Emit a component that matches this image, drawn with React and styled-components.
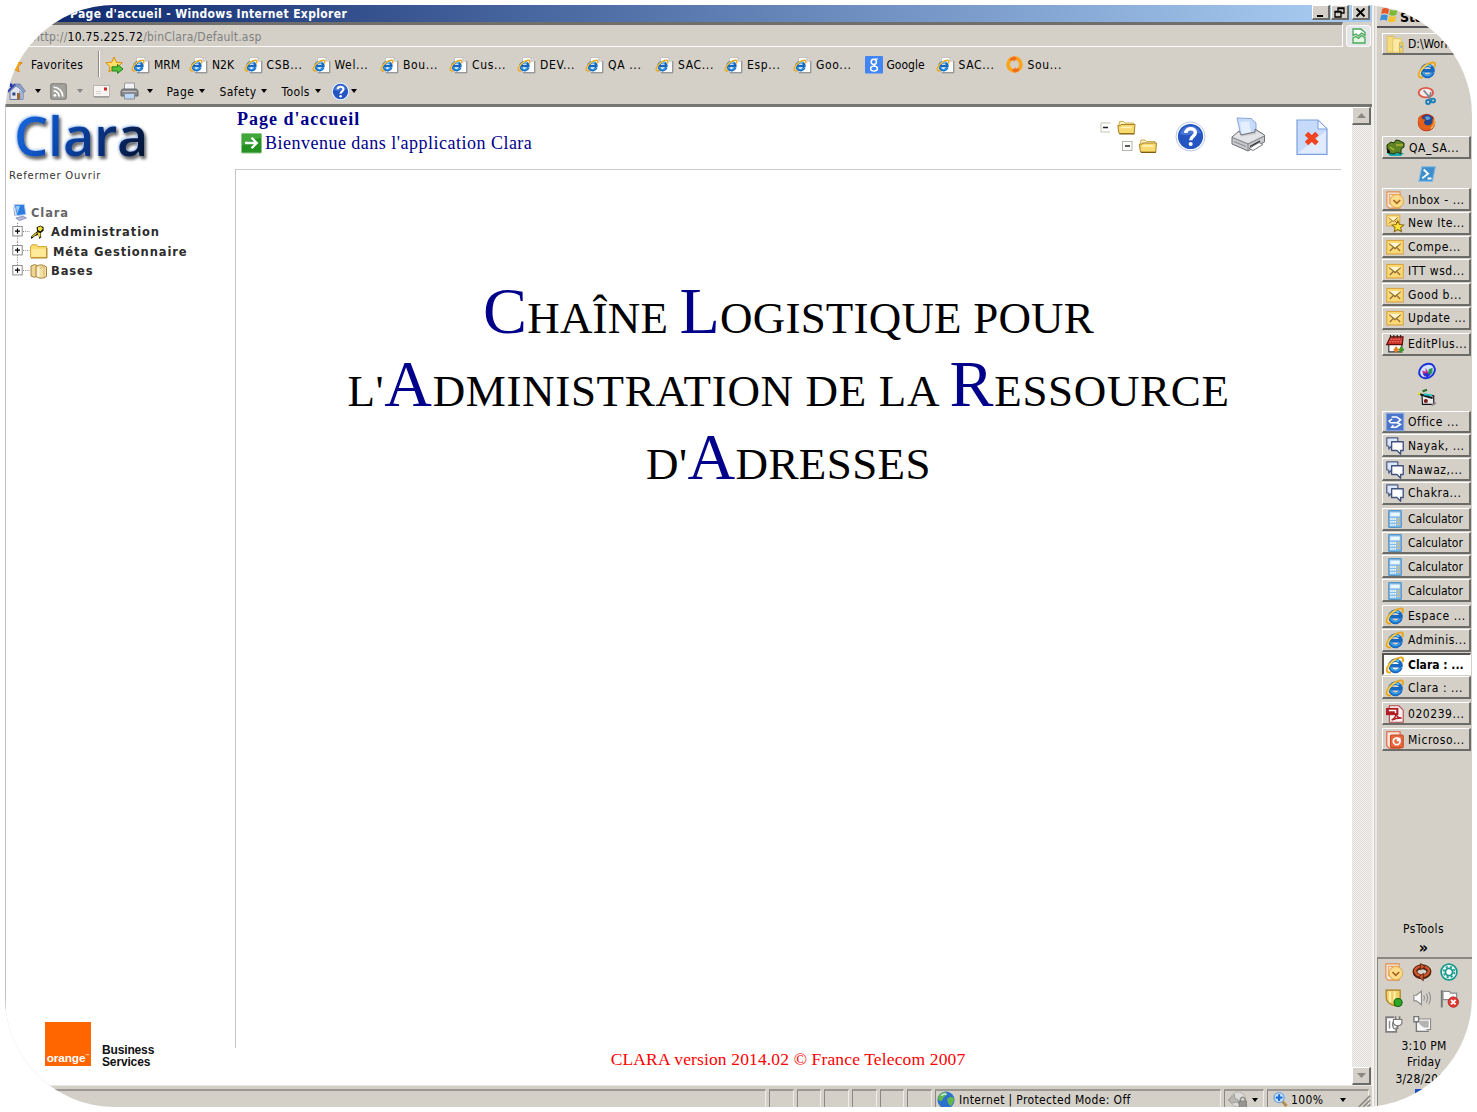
import React from "react";
import styled, { createGlobalStyle, css } from "styled-components";

const FACE = "#d4d0c8";
const UI = `"DejaVu Sans Condensed", "DejaVu Sans", sans-serif`;
const SERIF = `"Liberation Serif", serif`;

const Global = createGlobalStyle`
  * { box-sizing: border-box; }
  body { margin: 0; background: #fff; overflow: hidden; }
  svg { display: block; flex: none; overflow: visible; }
`;

const Screen = styled.div`
  margin: 5px;
  width: 1467px;
  height: 1102px;
  display: flex;
  overflow: hidden;
  border-radius: 110px;
  background: ${FACE};
  font: 12px/16px ${UI};
  color: #000;
  white-space: nowrap;
`;

const Browser = styled.div`
  width: 1367px;
  flex: none;
  display: flex;
  flex-direction: column;
`;

const TitleBar = styled.div`
  height: 17px;
  display: flex;
  align-items: center;
  padding: 0 2px 0 65px;
  background: linear-gradient(90deg, #0a246a 0%, #a6caf0 97%);
  color: #fff;
  font-weight: bold;
  font-size: 12px;
  letter-spacing: 0.35px;
`;

const WindowButtons = styled.div`
  display: flex;
  margin-left: auto;
  gap: 1px;
  align-self: flex-start;
`;

const raised = css`
  background: ${FACE};
  border-style: solid;
  border-width: 1px 2px 2px 1px;
  border-color: #fff #6b6b68 #6b6b68 #fff;
`;

const WinButton = styled.div`
  ${raised}
  width: 18px;
  height: 15px;
  margin-left: ${(p) => p.$ml || 0}px;
  display: flex;
  align-items: center;
  justify-content: center;
`;

const AddressRow = styled.div`
  height: 25px;
  display: flex;
  align-items: flex-start;
`;

const AddressField = styled.div`
  width: 1338px;
  height: 25px;
  border-style: solid;
  border-width: 3px 1px 1px 0;
  border-color: #6f6e6a #fff #fbfbf9 #fff;
  padding: 4px 0 0 28px;
  color: #808080;
  letter-spacing: 0.2px;
  b { font-weight: normal; color: #000; letter-spacing: 0.3px; }
`;

const CompatButton = styled.div`
  width: 25px;
  height: 22px;
  margin: 3px 0 0 3px;
  display: flex;
  align-items: center;
  justify-content: center;
  border: 1px solid #fafafa;
  border-radius: 3px;
  background: #e4e6ea;
`;

const FavBar = styled.div`
  height: 34px;
  display: flex;
  align-items: center;
`;

const FavItem = styled.div`
  width: ${(p) => p.$w}px;
  padding-top: 1px;
  display: flex;
  align-items: center;
  flex: none;
  letter-spacing: ${(p) => p.$ls || 0}px;
`;

const FavIcon = styled.span`
  width: ${(p) => p.$w || 22}px;
  flex: none;
`;

const Divider = styled.i`
  width: 2px;
  height: 26px;
  margin: 0 5px 0 0;
  background: #8d8a84;
  border-right: 1px solid #fff;
`;

const CommandBar = styled.div`
  height: 20px;
  display: flex;
  align-items: center;
  letter-spacing: 0.4px;
`;

const Slot = styled.div`
  width: ${(p) => p.$w}px;
  flex: none;
  display: flex;
  align-items: center;
`;

const MenuWord = styled(Slot)`
  padding: 1px 0 0 0.5px;
`;

const Arrow = styled.i`
  border: 3.5px solid transparent;
  border-top: 4px solid ${(p) => p.$color || "#000"};
  border-bottom: 0;
`;

const Edge = styled.div`
  height: 6px;
  border-bottom: 3px solid #777672;
`;

const Viewport = styled.div`
  height: 978px;
  display: flex;
  background: #fff;
`;

const Sidebar = styled.div`
  width: 230px;
  display: flex;
  flex-direction: column;
  border-left: 1px solid #c2c2c2;
`;

const ClaraLogo = styled.div`
  height: 58px;
  padding-left: 8px;
  font: 600 54px/56px "Open Sans", "Noto Sans", sans-serif;
  letter-spacing: -0.2px;
  span {
    background: linear-gradient(115deg, #1a6ae0 5%, #0b4bb4 35%, #0a2f78 65%, #03122e 95%);
    -webkit-background-clip: text;
    background-clip: text;
    color: transparent;
    filter: drop-shadow(-1px -1px 1px #a9c8f5) drop-shadow(2px 3px 1.5px rgba(0, 0, 0, 0.6));
  }
`;

const SideLinks = styled.div`
  height: 38px;
  padding: 3px 0 0 3px;
  font: 10px/16px "DejaVu Sans", sans-serif;
  letter-spacing: 0.77px;
  color: #333;
`;

const TreeRow = styled.div`
  height: 19.5px;
  padding-left: ${(p) => p.$pl}px;
  display: flex;
  align-items: center;
  font: bold 11.5px/16px "DejaVu Sans", sans-serif;
  letter-spacing: 0.88px;
  color: ${(p) => p.$color || "#2c2c2c"};
`;

const TreeIcon = styled.span`
  width: ${(p) => p.$w}px;
  flex: none;
`;

const OrangeLogo = styled.div`
  margin: auto 0 19px 39px;
  display: flex;
  align-items: flex-end;
  gap: 11px;
`;

const OrangeBox = styled.div`
  width: 46px;
  height: 44px;
  padding-bottom: 1px;
  display: flex;
  align-items: flex-end;
  justify-content: center;
  background: #ff6600;
  color: #fff;
  font: bold 11.8px/14px "Liberation Sans", sans-serif;
  letter-spacing: -0.1px;
  sup { font-size: 4px; line-height: 8px; margin-bottom: 5px; }
`;

const OrangeText = styled.div`
  margin-bottom: -2px;
  font: bold 12px/12px "Liberation Sans", sans-serif;
  letter-spacing: -0.15px;
  color: #111;
`;

const Page = styled.div`
  width: 1117px;
  display: flex;
  flex-direction: column;
`;

const PageHeader = styled.div`
  height: 62px;
  width: 1105px;
  display: flex;
  justify-content: space-between;
  color: #00008b;
  font: 18px/24px ${SERIF};
`;

const PageTitle = styled.div`
  padding-left: 2px;
  font-weight: bold;
  letter-spacing: 0.98px;
`;

const Welcome = styled.div`
  padding-left: 6px;
  display: flex;
  align-items: center;
  gap: 3px;
  letter-spacing: 0.49px;
`;

const Tools = styled.div`
  display: flex;
  align-items: flex-start;
  padding: 10px 12px 0 0;
`;

const ToolSlot = styled.div`
  width: ${(p) => p.$w}px;
  padding-top: ${(p) => p.$pt || 0}px;
`;

const Canvas = styled.div`
  width: 1106px;
  height: 879px;
  padding-top: 111.5px;
  border-top: 1.5px solid #cbcbcb;
  border-left: 1.5px solid #c4c4c4;
`;

const Headline = styled.div`
  font: 45px/73.2px ${SERIF};
  text-transform: uppercase;
  text-align: center;
  letter-spacing: ${(p) => p.$ls}px;
  em {
    font-style: normal;
    font-size: 66px;
    line-height: 0;
    color: #00008b;
  }
`;

const Version = styled.div`
  width: 1106px;
  text-align: center;
  color: #ff0000;
  font: 17.5px/22px ${SERIF};
  letter-spacing: 0.14px;
`;

const Scroll = styled.div`
  width: 20px;
  display: flex;
  flex-direction: column;
  justify-content: space-between;
  background: repeating-conic-gradient(#e0ddd8 0% 25%, #f3f2f0 0% 50%) 0 0 / 2px 2px;
`;

const ScrollButton = styled.div`
  ${raised}
  width: 19px;
  height: 18px;
  display: flex;
  align-items: center;
  justify-content: center;
`;

const StatusBar = styled.div`
  height: 22px;
  padding-top: 3px;
  display: flex;
  gap: 3px;
  border-top: 1px solid #e9e7e3;
`;

const Cell = styled.div`
  width: ${(p) => p.$w}px;
  flex: none;
  height: 18px;
  padding: 1px 0 0 ${(p) => p.$pl || 0}px;
  display: flex;
  align-items: center;
  border-top: 2px solid #9b9893;
  border-left: 1px solid ${(p) => (p.$first ? FACE : "#8b8883")};
  border-right: 1px solid #efedea;
  letter-spacing: 0.36px;
`;

const Taskbar = styled.div`
  width: 100px;
  flex: none;
  display: flex;
  flex-direction: column;
  border-left: 2px solid #f4f3f1;
  padding-left: 1px;
`;

const TaskInner = styled.div`
  flex: 1;
  display: flex;
  flex-direction: column;
  border-left: 2px solid #e9e7e3;
`;

const StartButton = styled.div`
  height: 23px;
  margin: 0 2px 4.6px 0;
  padding: 1px 0 0 3px;
  display: flex;
  align-items: flex-start;
  gap: 2px;
  font-weight: bold;
  font-size: 14px;
  line-height: 22px;
  border-bottom: 2px solid #555;
`;

const Group = styled.div`
  padding: 0 1px 2.2px 5px;
`;

const Task = styled.div`
  ${raised}
  height: 22.75px;
  margin-bottom: 1px;
  padding: 1px 0 0 3px;
  display: flex;
  align-items: center;
  letter-spacing: ${(p) => p.$ls}px;
  ${(p) =>
    p.$active &&
    css`
      background: #fff;
      font-weight: bold;
      border-width: 2px 1px 1px 2px;
      border-color: #55534f #fff #fff #55534f;
      padding-left: 2px;
    `}
  svg { margin-right: 4px; }
`;

const Launcher = styled.div`
  height: 23.75px;
  display: flex;
  align-items: center;
  justify-content: center;
`;

const PsTools = styled.div`
  margin-top: auto;
  height: 37px;
  text-align: center;
  line-height: 18px;
  padding-right: 2px;
  letter-spacing: 0.4px;
  b { display: block; font-size: 16px; line-height: 19px; }
`;

const Tray = styled.div`
  height: 150px;
  border-top: 2px solid #8b8883;
  border-left: 1px solid #8b8883;
  padding-left: 7px;
`;

const TrayIcons = styled.div`
  display: grid;
  grid-template-columns: repeat(3, 27.5px);
  grid-auto-rows: 26px;
  align-items: center;
`;

const Clock = styled.div`
  width: 78px;
  padding-top: 1px;
  text-align: center;
  line-height: 16.4px;
  letter-spacing: 0.2px;
`;

const TrayBadge = styled.div`
  width: 18px;
  height: 10px;
  margin: 2px 0 0 30px;
  background: #1f4fc0;
`;

const Svg = ({ s = 18, w, h, v = 16, children }) => (
  <svg width={w || s} height={h || s} viewBox={typeof v === "string" ? v : `0 0 ${v} ${v}`} fill="none">
    {children}
  </svg>
);

const IeMark = () => (
  <>
    <path d="M13.2 10.4A5 5 0 1 1 13.3 7.4V8.6H5" stroke="#1769c0" strokeWidth="3.1" />
    <path d="M12.6 10.6A4.6 4.6 0 0 1 4.2 9.8" stroke="#38a0ea" strokeWidth="1.4" />
    <path d="M4.4 6.4A4.3 4.3 0 0 1 11.6 5" stroke="#6ccaf8" strokeWidth="1.5" />
    <path d="M4.4 14.6C-2.4 15.6 1 7.4 7.4 3.4C13 0 16.6 .8 14.6 5.4" stroke="#e9a820" strokeWidth="1.9" />
    <path d="M1.8 13C1.2 10 4.4 5.6 8.2 3.2" stroke="#ffdd63" strokeWidth=".9" />
  </>
);
const Ie = ({ s = 18 }) => <Svg s={s}><IeMark /></Svg>;

const IePage = () => (
  <Svg s={18} v={18}>
    <path d="M4.5 1.5H13.5L16.5 4.5V16.5H4.5Z" fill="#fff" stroke="#c4c4c4" />
    <path d="M16.8 5V16.8H5" stroke="#858585" />
    <path d="M13 1.5V5H16.5" stroke="#b5b5b5" fill="#e4e4e4" />
    <g transform="translate(-.3 3.2) scale(.8)"><IeMark /></g>
  </Svg>
);

const GoogleIcon = () => (
  <Svg s={18} v={18}>
    <rect width="18" height="17.5" rx="1" fill="#4285f4" />
    <circle cx="8.8" cy="5.8" r="2.6" stroke="#fff" strokeWidth="1.5" />
    <ellipse cx="9" cy="12.6" rx="3.4" ry="2.5" stroke="#fff" strokeWidth="1.4" />
    <path d="M10 3H13M8 8.4L10.4 10.2" stroke="#fff" strokeWidth="1.2" />
  </Svg>
);

const SoulIcon = () => (
  <Svg s={17}>
    <circle cx="8" cy="8" r="6" stroke="#fba51c" strokeWidth="3.6" />
    <path d="M4 3.8A5.9 5.9 0 0 1 8.6 2.2M12 12.2A5.9 5.9 0 0 1 7.4 13.8" stroke="#f26a1d" strokeWidth="2.6" />
    <path d="M7 0L10.4 2.6L7 5.4ZM9 10.6L5.6 13.4L9 16Z" fill="#f26a1d" />
  </Svg>
);

const Star = ({ add }) => (
  <Svg s={20} v={20}>
    <path d="M9 2L11.4 7.2L17.3 7.8L12.9 11.6L14.2 17L9 14.2L3.9 17L5.1 11.6L.8 7.8L6.7 7.2Z" fill={add ? "#ffe06a" : "#fba91e"} stroke="#dc8b12" />
    {add && <path d="M7 11.8H12.5V9.4L18 14L12.5 18.4V16H7Z" fill="#54c23b" stroke="#24831b" />}
  </Svg>
);

const Home = () => (
  <Svg s={19} v={19}>
    <path d="M3 1.5H5.5V5H3Z" fill="#1d37b5" />
    <path d="M3 9V17.5H16V8.5L10 3Z" fill="#dfe4ef" stroke="#6477a1" />
    <path d="M.8 9.5L8 2L13 2L18.4 9.2L16.6 10.6L12 6L8 3.6L2 10.4Z" fill="#8fa0c8" stroke="#50659c" strokeWidth=".6" />
    <path d="M.8 9.5L8 2" stroke="#2338b0" strokeWidth="1.6" />
    <path d="M12 8L16 10.5V17.5H12Z" fill="#9fb2d6" />
    <path d="M5.4 10.5H8.4V13.5H5.4Z" fill="#2d4685" />
    <path d="M10 11H13V17.5H10Z" fill="#9a6835" />
  </Svg>
);

const Rss = () => (
  <Svg s={17}>
    <rect x=".7" y=".7" width="14.6" height="14.6" rx="1.5" fill="#a4a29e" stroke="#7d7b77" />
    <circle cx="4.6" cy="11.6" r="1.3" fill="#fff" />
    <path d="M3.4 7.5A5 5 0 0 1 8.5 12.8M3.4 4A8.6 8.6 0 0 1 12 12.8" stroke="#fff" strokeWidth="1.6" />
  </Svg>
);

const Mail = () => (
  <Svg w={17} h={14} v="0 0 17 14">
    <rect x=".5" y="1.5" width="16" height="11" fill="#f7f4f2" stroke="#bab5ae" />
    <path d="M1 13H16" stroke="#888" />
    <rect x="11" y="3.5" width="3" height="3" fill="#cf2828" />
    <path d="M3 7.5H8M3 9.5H8" stroke="#d5d2d0" />
  </Svg>
);

const SmallPrinter = () => (
  <Svg w={19} h={18} v="0 0 19 18">
    <path d="M4.5 1H14.5V8H4.5Z" fill="#f2f2f2" stroke="#9a9a9a" />
    <path d="M2.5 7H16.5L18 9V14H1V9Z" fill="#84868a" stroke="#66686d" />
    <path d="M4.5 11.5H14.5V17H4.5Z" fill="#bcd6f7" stroke="#8a8f98" />
    <path d="M2.5 9.5H16.5" stroke="#c4c4c4" />
  </Svg>
);

const Help = ({ s }) => (
  <Svg s={s} v={32}>
    <circle cx="16" cy="16" r="15" fill="#fff" stroke="#b7c4e6" />
    <circle cx="16" cy="16" r="13" fill="#2455c0" />
    <path d="M5 13A11.5 11.5 0 0 1 27 13C20 10 12 18 5 13Z" fill="#5e8ae2" opacity=".6" />
    <path d="M11.2 12.4C11.2 6.4 21 6.6 21 12.2C21 16 16.2 15.8 16.2 19.8" stroke="#fff" strokeWidth="3.6" />
    <circle cx="16.2" cy="23.8" r="2.1" fill="#fff" />
  </Svg>
);

const Monitor = () => (
  <Svg s={17}>
    <path d="M3 .6L12.5 .2L14 9.8L5.4 11Z" fill="#2e7be0" stroke="#b9cdf0" />
    <path d="M4.4 2L8.5 1.7L6 9Z" fill="#9acbfa" />
    <path d="M2 1L4.5 11.5L3 10.5Z" fill="#8d9cc9" />
    <path d="M4.5 13.2L11.5 11.4L14.5 13.2L8 15.6Z" fill="#b4b8da" stroke="#8084ae" strokeWidth=".7" />
  </Svg>
);

const PlusBox = ({ last }) => (
  <Svg w={18} h={19.5} v="0 0 18 19.5">
    <path d={last ? "M5.5 0V5" : "M5.5 0V19.5"} stroke="#888" strokeDasharray="1 1.2" />
    <path d="M11 8.5H18" stroke="#888" strokeDasharray="1 1.2" />
    <rect x=".8" y="3.5" width="9.4" height="9.4" fill="#fff" stroke="#8c8c8c" />
    <path d="M3 8.2H8M5.5 5.7V10.7" stroke="#000" strokeWidth="1.2" />
  </Svg>
);

const Key = () => (
  <Svg s={15}>
    <path d="M7 2.5L11 .5L14.5 2V6L11.5 8.5L12 13L10 15L9 10.5L5 12L1.5 15L.8 12.8L4 9.5L7.5 7Z" fill="#1c1a05" />
    <path d="M9 3L11.5 2L13 4L11 6L9 5ZM8.5 8.5L10.5 9L10.6 12.5ZM2.5 12.5L7 8.8" fill="#f5e233" stroke="#f5e233" strokeWidth="1.1" />
  </Svg>
);

const Folder = () => (
  <Svg w={18} h={15} v="0 0 18 15">
    <path d="M.6 2.6L2 .8H6.6L8 2.6H16.5V13.5H.6Z" fill="#fbdc6c" stroke="#d0a53a" />
    <path d="M1.4 5H15.8V12.8H1.4Z" fill="#ffeb99" />
    <path d="M1 14H17V4" stroke="#b5882a" />
  </Svg>
);

const OpenFolder = () => (
  <Svg w={19} h={15} v="0 0 19 15">
    <path d="M2 5L2.5 1.5H6.5L8 3H16.5V5" fill="#fdf1bd" stroke="#cfab55" />
    <path d="M.8 5.6H3.5L4 4.5H18L17.2 13.5H2Z" fill="#f9da6f" stroke="#a98124" />
    <path d="M4 7.5H15" stroke="#fff4bf" strokeWidth="1.6" />
    <path d="M2.5 14H17.4" stroke="#7d5c10" />
  </Svg>
);

const Bases = () => (
  <Svg w={18} h={16} v="0 0 18 16">
    <path d="M1 3Q4.5 0 8 3V13Q4.5 15.6 1 13Z" fill="#efd694" stroke="#a5853b" />
    <path d="M6 3.5Q11 0 16.5 4V13.5Q11.5 17 6 13.5Z" fill="#f3dfa6" stroke="#a5853b" />
    <path d="M8.4 4.6V14" stroke="#fff8de" strokeWidth="2" />
    <path d="M10 6Q11 3 14 3.6V14" stroke="#d5b768" />
  </Svg>
);

const GoArrow = () => (
  <Svg s={21} v={21}>
    <rect x=".5" y=".5" width="20" height="19.5" rx="1" fill="#259122" stroke="#8cc887" />
    <path d="M1 1H20V5Q9 6 1 13Z" fill="#55b64b" opacity=".6" />
    <path d="M4 10H15.5M10.5 4.8L15.8 10L10.5 15.2" stroke="#fff" strokeWidth="2.3" />
  </Svg>
);

const TreeToggle = () => (
  <svg width="60" height="38" viewBox="0 0 60 38" fill="none">
    <path d="M10.5 6H1V15H10" stroke="#c4c2ae" />
    <path d="M3 10.5H8" stroke="#222" strokeWidth="1.3" />
    <rect x="22.5" y="24.5" width="9.5" height="9" stroke="#b5b5ab" />
    <path d="M25 29H30" stroke="#222" strokeWidth="1.3" />
    <g transform="translate(17 3)"><OpenFolder /></g>
    <g transform="translate(38.5 21.5)"><OpenFolder /></g>
  </svg>
);

const Printer = () => (
  <svg width="35" height="36" viewBox="0 0 35 36" fill="none">
    <path d="M6 1L20 1.5L25 6V17L10 19Z" fill="#c7dcfb" stroke="#8aa6d6" />
    <path d="M9 5L18 4.5L20 15L11 17Z" fill="#e5efff" />
    <path d="M1 20L8 14L10 18L24 15V12L33.5 18V25L17 34L1 27Z" fill="#c8c9cc" stroke="#707277" />
    <path d="M2 20L17 26L33 18.5L25 14.5V17L10 19.5L8 15Z" fill="#e3e4e6" />
    <path d="M1 20.5L17 27V34M17 27L33.5 19" stroke="#808287" />
    <path d="M3 24.5L15 29.5" stroke="#8d8f94" strokeWidth="1.2" />
    <path d="M18 31.5L28 25.5L32 27.5L22 33.5Z" fill="#fff" stroke="#777" />
    <path d="M19 29.5L29 24" stroke="#333" strokeWidth="1.4" />
  </svg>
);

const CloseDoc = () => (
  <svg width="32" height="37" viewBox="0 0 32 37" fill="none">
    <path d="M1 1H22L31 10V35.5H1Z" fill="#c6dafb" stroke="#7d9fdc" strokeWidth="1.2" />
    <path d="M2 34L30 12V34Z" fill="#e0ebfd" />
    <path d="M22 1V10H31Z" fill="#f5f9ff" stroke="#7d9fdc" />
    <path d="M10.5 14.5L21 24.5M21 14.5L10.5 24.5" stroke="#ee4420" strokeWidth="5" />
  </svg>
);

const WindowsFlag = () => (
  <Svg s={18}>
    <path d="M2 2.5Q5 .8 8 2.8L7.2 7.4Q4 5.8 1 7.2Z" fill="#e8582b" />
    <path d="M9 3.2Q12 4.8 15.6 3L14.6 7.8Q11 9.4 8.2 7.8Z" fill="#7fb935" />
    <path d="M.9 8.2Q4 6.8 7 8.4L6 13Q3 11.4 0 12.8Z" fill="#3d8fd9" />
    <path d="M8 8.9Q11 10.4 14.4 8.8L13.4 13.6Q10 15.2 7 13.6Z" fill="#f7c22c" />
  </Svg>
);

const Snip = () => (
  <Svg s={18}>
    <ellipse cx="7" cy="5" rx="6.4" ry="4.2" fill="#f4eceb" stroke="#dd5a4a" strokeWidth="1.7" />
    <path d="M5 3L12.4 11.5M11.5 4.5L9.5 12" stroke="#7b8794" strokeWidth="1.5" />
    <circle cx="9" cy="13.4" r="1.8" stroke="#1d7fb8" strokeWidth="1.7" />
    <circle cx="13.4" cy="12" r="1.7" stroke="#1d7fb8" strokeWidth="1.7" />
  </Svg>
);

const Firefox = () => (
  <Svg s={19}>
    <circle cx="8" cy="8" r="7.4" fill="#b8331a" />
    <circle cx="8.8" cy="6.4" r="4.9" fill="#23478c" />
    <path d="M6.6 3.4Q9.6 1.8 11.6 4.4Q9.6 6.6 7.6 5.4Z" fill="#5f9bd6" />
    <path d="M1 4L3 2L4.6 5L7 5.4L5.8 8Q6.5 10.6 10 10.4Q13.6 9.6 13 5Q16 9 12.8 13Q8 16.5 3 13Q0 9 1 4Z" fill="#e2601b" />
    <path d="M14.3 4.6Q15.8 10 11.5 13" stroke="#fbb03c" strokeWidth="1.3" />
  </Svg>
);

const Frog = () => (
  <Svg w={19} h={18} v="0 0 19 18">
    <path d="M1 14H18L15 17H4Z" fill="#18a8b0" />
    <path d="M1 6L5 3L8 4L10 1L13 1.5L18 4V8L15 10V15L11 13L8 15L3 14L1 10Z" fill="#5f8424" stroke="#193607" />
    <path d="M10 6H17M4 8L8 11" stroke="#b5b43a" strokeWidth="1.5" />
    <path d="M1 9L4 12V14H1Z" fill="#111" />
  </Svg>
);

const PowerShell = () => (
  <Svg s={18}>
    <path d="M3.4 1.5H15.5L12.8 14.5H.7Z" fill="#3e8ecb" stroke="#82bbe5" />
    <path d="M5 4L9 7.8L3.8 11.8M8.5 12H12" stroke="#fff" strokeWidth="1.6" />
  </Svg>
);

const Outlook = () => (
  <Svg s={18}>
    <path d="M.8 .8H12.5V15.2H2.8L.8 13Z" fill="#fbeede" stroke="#e08b4e" />
    <path d="M3 12V3H11" stroke="#e9a46f" />
    <circle cx="9.6" cy="9" r="6" fill="#fcdc8a" stroke="#e2ac52" />
    <path d="M6.6 8L9.6 11L12.6 8" stroke="#a8641a" strokeWidth="1.5" />
  </Svg>
);

const Envelope = ({ star }) => (
  <Svg s={18}>
    <g transform={star ? "scale(.8)" : "translate(0 1)"}>
      <rect x=".7" y="1.2" width="14.6" height="12" fill="#fbd977" stroke="#dba53f" />
      <path d="M3.4 10.6L6.4 7.6M12.6 10.6L9.6 7.6M3 4L8 8.4L13 4" stroke="#8f6a2c" strokeWidth="1.1" />
      <path d="M3.2 3.4H12.8L8 7.4Z" fill="#fff6d2" />
    </g>
    {star && <path d="M10.5 6L12 9.4L15.8 9.8L13 12.2L13.8 15.8L10.5 13.9L7.3 15.8L8.1 12.2L5.4 9.8L9 9.4Z" fill="#ffe433" stroke="#8c6a10" strokeWidth=".9" />}
  </Svg>
);
const NewItems = () => <Envelope star />;

const EditPlus = () => (
  <Svg s={18}>
    <path d="M2.5 7H14V15H2.5Z" fill="#fff" stroke="#333" />
    <path d="M.6 8.5L4 1.5H15.2L14.5 8.5Z" fill="#c93329" stroke="#5c0f0c" />
    <path d="M4 3.8H14M3 6H14" stroke="#f2867e" strokeDasharray="1.4 1" />
    <path d="M4 0V2.5M7 0V2.5M10 0V2.5M13 0V2.5" stroke="#222" />
    <path d="M9 10.5V15.5M6.8 13H11.3" stroke="#e87b1c" strokeWidth="2" />
    <path d="M13.5 10.5V15.5M11.5 13H16" stroke="#3d9b22" strokeWidth="2" />
  </Svg>
);

const Ring = () => (
  <Svg s={18}>
    <ellipse cx="8" cy="8" rx="7.4" ry="6" transform="rotate(-35 8 8)" fill="#d6e4ff" stroke="#1a2fd8" strokeWidth="1.7" />
    <path d="M5.5 13L3.6 7.6L6.8 8.6V5L9.5 10Z" fill="#c0288b" />
    <path d="M8.5 12L9.5 6.4L13 5L12.8 10Z" fill="#28925c" />
    <path d="M4 10.5Q8 9.5 11.5 11L8 14Z" fill="#2a2fd2" />
  </Svg>
);

const Gadget = () => (
  <Svg s={18}>
    <path d="M3.5 6L14 7V14.5H4Z" fill="#e9e9e9" stroke="#111" />
    <path d="M.5 5L6 7L13 9" stroke="#111" strokeWidth="1.6" />
    <path d="M5 5.5L12.5 6.6" stroke="#21c4c4" strokeWidth="1.7" />
    <path d="M4 3L8 1.5" stroke="#2c7026" strokeWidth="2" />
    <circle cx="7" cy="11.5" r="1.8" fill="#7d1b1b" />
    <path d="M12 15.5L16 13" stroke="#888" strokeWidth="1.5" />
    <circle cx="1" cy="5" r="1.2" fill="#dfe526" />
  </Svg>
);

const Communicator = () => (
  <Svg s={18}>
    <rect x=".3" y=".3" width="15.4" height="15.4" fill="#4a75cb" stroke="#85a4e4" />
    <path d="M5 3.5H9.5L13 6L10 8.6H4M4 8.6L2.8 7L5.4 5.4M10 8.6L12.8 10L9 12.6H5.2L6.4 10.8" stroke="#fff" strokeWidth="1.4" />
  </Svg>
);

const Chat = () => (
  <Svg s={18}>
    <path d="M.7 .8H10.5V8H5L2.5 10.8V8H.7Z" fill="#dfe8fa" stroke="#4b5d85" strokeLinejoin="round" strokeWidth="1.1" />
    <path d="M5 4.2H15.3V12H13V15.3L9.8 12H5Z" fill="#fbfdff" stroke="#41537c" strokeLinejoin="round" strokeWidth="1.2" />
  </Svg>
);

const Calc = () => (
  <Svg s={18}>
    <rect x="2.4" y=".6" width="11.2" height="14.8" rx=".6" fill="#86bce8" stroke="#5796c9" />
    <rect x="3.8" y="2.2" width="8.4" height="3.4" fill="#eaf7ff" />
    <path d="M3.8 8H9M3.8 10.6H9M3.8 13.2H9" stroke="#f4faff" strokeWidth="1.6" strokeDasharray="1.3 .6" />
    <path d="M11 7V13.8" stroke="#f0c066" strokeWidth="1.6" strokeDasharray="1.6 .8" />
  </Svg>
);

const Pdf = () => (
  <Svg s={18}>
    <path d="M3 .7H11.4L15.3 4.6V15.3H3Z" fill="#f9f1f1" stroke="#b04a4d" />
    <rect x="0" y="2.6" width="11" height="6.4" fill="#b01e24" />
    <path d="M2.5 4.8H8.5V7.4" stroke="#fff" strokeWidth="1.3" />
    <path d="M5 13.4Q9 11 8.6 7.6Q10 12 14 11.6Q9 11.4 5 13.4Z" stroke="#b01e24" strokeWidth="1.2" />
  </Svg>
);

const Ppt = () => (
  <Svg s={18}>
    <path d="M.7 .7H12.5V15.3H2.8L.7 13Z" fill="#fae6dc" stroke="#d9603a" />
    <rect x="4" y="3.5" width="11.3" height="11.3" rx="1" fill="#e8673c" stroke="#c84a22" />
    <circle cx="9.5" cy="9.2" r="3" stroke="#fff" strokeWidth="1.5" />
    <path d="M9.5 9.2V6H12.8V9.2Z" fill="#fff" />
  </Svg>
);

const Explorer = () => (
  <Svg s={18}>
    <path d="M1 1.2H6.5L8 3V15.3H1Z" fill="#f6dc80" stroke="#dfc066" />
    <path d="M6 3.2H13.5V15.3H6Z" fill="#fbeaa6" stroke="#e4c970" />
    <path d="M12 7H15V15.3H12Z" fill="#f3d574" stroke="#d9b755" />
    <path d="M13.5 9V11.5" stroke="#59a5d8" />
  </Svg>
);

const SwapArrows = () => (
  <Svg s={18}>
    <ellipse cx="8" cy="7.8" rx="6.2" ry="4.4" stroke="#4f2412" strokeWidth="4.4" />
    <ellipse cx="8" cy="7.2" rx="6.2" ry="4.2" stroke="#d4562a" strokeWidth="2.2" />
    <path d="M6.8 .4L10.8 3.4L6.5 6ZM9.2 9.2L5.2 12.4L9.2 15.8Z" fill="#d4562a" stroke="#4f2412" strokeWidth=".7" />
  </Svg>
);

const Gear = () => (
  <Svg s={18}>
    <circle cx="8" cy="8" r="7" fill="#fff" stroke="#1a9a8c" strokeWidth="1.6" />
    <circle cx="8" cy="8" r="3.2" stroke="#1a9a8c" strokeWidth="1.7" />
    <circle cx="8" cy="8" r="4.8" stroke="#1a9a8c" strokeWidth="1.4" strokeDasharray="2 1.8" />
  </Svg>
);

const Shield = () => (
  <Svg s={18}>
    <path d="M1 1H13.5V9Q13 13 9 15Q1.5 13 1 8Z" fill="#f4d068" stroke="#a77a1a" />
    <path d="M4.5 2V12M8.5 2V13" stroke="#fff3bb" strokeWidth="1.6" />
    <circle cx="11.6" cy="12" r="3.6" fill="#2fa526" stroke="#10620f" />
  </Svg>
);

const Speaker = () => (
  <Svg s={18}>
    <path d="M.8 5.5H3L7.5 2V14L3 10.5H.8Z" fill="#fafafa" stroke="#8b8b8b" />
    <path d="M9.5 5.5Q11 8 9.5 10.5M11.8 4Q14 8 11.8 12M14 2.5Q17 8 14 13.5" stroke="#8f8f8f" />
  </Svg>
);

const Flag = () => (
  <Svg s={19}>
    <path d="M1.5 1V15.5" stroke="#777" strokeWidth="1.6" />
    <path d="M2.5 2H8L9 3.5H14V9H2.5Z" fill="#fff" stroke="#8b8b8b" />
    <circle cx="11.2" cy="11" r="4.4" fill="#e03830" stroke="#a81d1a" strokeWidth=".6" />
    <path d="M9.3 9.1L13.1 12.9M13.1 9.1L9.3 12.9" stroke="#fff" strokeWidth="1.6" />
  </Svg>
);

const Power = () => (
  <Svg s={18}>
    <path d="M8 2H1V15H10V11" stroke="#808080" strokeWidth="1.6" fill="#fff" />
    <path d="M4 5V12M7 6Q6 14 11 12" stroke="#8a8a8a" strokeWidth="1.3" />
    <path d="M7.5 4H15V7Q14.5 9.5 11.3 9.5Q8 9.5 7.5 7Z" fill="#fff" stroke="#777" />
    <path d="M9.4 4V1M13 4V1M11.2 9.5V12.5" stroke="#777" strokeWidth="1.4" />
  </Svg>
);

const Network = () => (
  <Svg s={18}>
    <rect x="4" y="3.5" width="11.6" height="9.4" fill="#fff" stroke="#8e8c89" />
    <rect x="5.6" y="5" width="8.4" height="6.2" fill="#b5b3b0" />
    <path d="M.8 1.5H5V6H.8ZM3 6V14.6H14" stroke="#777" strokeWidth="1.2" fill="#f6f6f6" />
  </Svg>
);

const Globe = () => (
  <Svg s={18}>
    <circle cx="8" cy="8" r="7.6" fill="#2e70ce" />
    <path d="M1.2 5Q3 1 7.5 .8L9 3L6 5.5L4 9L1 8ZM9 7L12 5L15 6Q15.6 10 12 13.6L10 11Z" fill="#62b84b" />
    <path d="M4 4.2Q6 2 8.6 3" stroke="#d3efff" strokeWidth="1.4" />
  </Svg>
);

const Lock = () => (
  <Svg w={20} h={18} v="0 0 20 18">
    <circle cx="10" cy="8.5" r="7.6" fill="#dddbd8" stroke="#b5b3af" />
    <path d="M0 9L6.5 3.4V7Q11 8 12 13Q9 10 4 12Z" fill="#b9b7b3" stroke="#96948f" strokeWidth=".8" />
    <path d="M12.5 10V7.8Q14.8 4.6 17 7.8V10" stroke="#8e8c88" strokeWidth="1.5" />
    <rect x="11" y="10" width="7.6" height="6.4" fill="#989692" stroke="#777" strokeWidth=".7" />
  </Svg>
);

const Zoom = () => (
  <Svg s={15}>
    <path d="M9.5 9.5L14.5 15" stroke="#b38a4b" strokeWidth="3" />
    <circle cx="6.5" cy="6" r="5.3" fill="#d9ecff" stroke="#6ea5dc" strokeWidth="1.4" />
    <path d="M6.5 2.4V9.6M2.9 6H10.1" stroke="#1f6fd3" strokeWidth="2.5" />
  </Svg>
);

const Compat = () => (
  <Svg s={16}>
    <path d="M2 7.4V1H10L14 4.6V7.4L10.5 5L7.5 8L5 6Z" fill="#fff" stroke="#45a855" strokeWidth="1.3" />
    <path d="M2 15V9.9L5 8.5L7.5 10.5L10.5 7.5L14 9.9V15Z" fill="#e2f5e2" stroke="#45a855" strokeWidth="1.3" />
  </Svg>
);

const favorites = [
  ["MRM", 58, IePage], ["N2K", 54.5, IePage], ["CSB...", 68, IePage], ["Wel...", 68.5, IePage],
  ["Bou...", 69, IePage], ["Cus...", 68, IePage], ["DEV...", 68, IePage], ["QA ...", 70, IePage],
  ["SAC...", 69, IePage], ["Esp...", 69, IePage], ["Goo...", 70.5, IePage], ["Google", 72, GoogleIcon],
  ["SAC...", 69, IePage], ["Sou...", 70, SoulIcon],
];

const taskGroups = [
  [["D:\\Work", Explorer]],
  [[null, Ie]], [[null, Snip]], [[null, Firefox]],
  [["QA_SA...", Frog]],
  [[null, PowerShell]],
  [["Inbox - ...", Outlook], ["New Ite...", NewItems], ["Compe...", Envelope], ["ITT wsd...", Envelope], ["Good b...", Envelope], ["Update ...", Envelope]],
  [["EditPlus...", EditPlus]],
  [[null, Ring]], [[null, Gadget]],
  [["Office ...", Communicator], ["Nayak, ...", Chat], ["Nawaz,...", Chat], ["Chakra...", Chat]],
  [["Calculator", Calc], ["Calculator", Calc], ["Calculator", Calc], ["Calculator", Calc]],
  [["Espace ...", Ie], ["Adminis...", Ie], ["Clara : ...", Ie, true], ["Clara : ...", Ie]],
  [["020239...", Pdf]],
  [["Microso...", Ppt]],
];

const trayIcons = [Outlook, SwapArrows, Gear, Shield, Speaker, Flag, Power, Network];

const dotted = (label, wide, plain) => (label.endsWith("...") ? wide : plain);

function BrowserChrome() {
  return (
    <>
      <TitleBar>
        Page d'accueil - Windows Internet Explorer
        <WindowButtons>
          <WinButton><Svg s={11} v={11}><path d="M2 9H8" stroke="#000" strokeWidth="2" /></Svg></WinButton>
          <WinButton><Svg s={11} v={11}><path d="M4 4V1H10V6H7M4 1.5H10" stroke="#000" strokeWidth="1.3" /><path d="M1 4.5H7V10H1ZM1 5H7" stroke="#000" strokeWidth="1.3" /></Svg></WinButton>
          <WinButton $ml={2}><Svg s={11} v={11}><path d="M1.5 1.5L9.5 9.5M9.5 1.5L1.5 9.5" stroke="#000" strokeWidth="1.9" /></Svg></WinButton>
        </WindowButtons>
      </TitleBar>
      <AddressRow>
        <AddressField>http://<b>10.75.225.72</b>/binClara/Default.asp</AddressField>
        <CompatButton><Compat /></CompatButton>
      </AddressRow>
      <FavBar>
        <FavItem $w={93} $ls={0.4}><FavIcon $w={26}><Star /></FavIcon>Favorites</FavItem>
        <Divider />
        <FavItem $w={27}><Star add /></FavItem>
        {favorites.map(([label, w, Icon], i) => (
          <FavItem key={i} $w={w} $ls={dotted(label, 0.65, 0)}><FavIcon><Icon /></FavIcon>{label}</FavItem>
        ))}
      </FavBar>
      <CommandBar>
        <Slot $w={2} />
        <Slot $w={28}><Home /></Slot>
        <Slot $w={15}><Arrow /></Slot>
        <Slot $w={27}><Rss /></Slot>
        <Slot $w={16}><Arrow $color="#8a8782" /></Slot>
        <Slot $w={27}><Mail /></Slot>
        <Slot $w={27}><SmallPrinter /></Slot>
        <Slot $w={19}><Arrow /></Slot>
        <MenuWord $w={33}>Page</MenuWord><Slot $w={20}><Arrow /></Slot>
        <MenuWord $w={42}>Safety</MenuWord><Slot $w={20}><Arrow /></Slot>
        <MenuWord $w={34}>Tools</MenuWord><Slot $w={16}><Arrow /></Slot>
        <Slot $w={20}><Help s={19} /></Slot><Arrow />
      </CommandBar>
      <Edge />
    </>
  );
}

function SidePanel() {
  return (
    <Sidebar>
      <ClaraLogo><span>Clara</span></ClaraLogo>
      <SideLinks>Refermer Ouvrir</SideLinks>
      <TreeRow $pl={5} $color="#666"><TreeIcon $w={20}><Monitor /></TreeIcon>Clara</TreeRow>
      <TreeRow $pl={6}><PlusBox /><TreeIcon $w={21}><Key /></TreeIcon>Administration</TreeRow>
      <TreeRow $pl={6}><PlusBox /><TreeIcon $w={23}><Folder /></TreeIcon>Méta Gestionnaire</TreeRow>
      <TreeRow $pl={6}><PlusBox last /><TreeIcon $w={21}><Bases /></TreeIcon>Bases</TreeRow>
      <OrangeLogo>
        <OrangeBox>orange<sup>™</sup></OrangeBox>
        <OrangeText>Business<br />Services</OrangeText>
      </OrangeLogo>
    </Sidebar>
  );
}

function MainPage() {
  return (
    <Page>
      <PageHeader>
        <div>
          <PageTitle>Page d'accueil</PageTitle>
          <Welcome><GoArrow />Bienvenue dans l'application Clara</Welcome>
        </div>
        <Tools>
          <ToolSlot $w={75}><TreeToggle /></ToolSlot>
          <ToolSlot $w={56} $pt={4}><Help s={31} /></ToolSlot>
          <ToolSlot $w={65}><Printer /></ToolSlot>
          <ToolSlot $w={32} $pt={2}><CloseDoc /></ToolSlot>
        </Tools>
      </PageHeader>
      <Canvas>
        <Headline $ls={0.19}><em>C</em>haîne <em>L</em>ogistique pour</Headline>
        <Headline $ls={0.66}>l'<em>A</em>dministration de la <em>R</em>essource</Headline>
        <Headline $ls={0.4}>d'<em>A</em>dresses</Headline>
      </Canvas>
      <Version>CLARA version 2014.02 © France Telecom 2007</Version>
    </Page>
  );
}

function Status() {
  return (
    <StatusBar>
      <Cell $w={761} $first />
      <Cell $w={25} /><Cell $w={24} /><Cell $w={25} /><Cell $w={25} /><Cell $w={24} /><Cell $w={25} />
      <Cell $w={286} $pl={1}><Slot $w={22}><Globe /></Slot>Internet | Protected Mode: Off</Cell>
      <Cell $w={40} $pl={3}><Slot $w={24}><Lock /></Slot><Arrow /></Cell>
      <Cell $w={102} $pl={5}>
        <Slot $w={18}><Zoom /></Slot><Slot $w={49}>100%</Slot><Slot $w={17}><Arrow /></Slot>
        <Svg s={14}><path d="M2 16L15 3M7 16L15 8M12 16L15 13" stroke="#8b8883" strokeWidth="1.8" /></Svg>
      </Cell>
    </StatusBar>
  );
}

function TaskPanel() {
  return (
    <Taskbar>
      <TaskInner>
        <StartButton><WindowsFlag />Start</StartButton>
        {taskGroups.map((group, g) => (
          <Group key={g}>
            {group.map(([label, Icon, active], i) =>
              label ? (
                <Task key={i} $active={active} $ls={active ? 0 : dotted(label, 0.55, 0)}><Icon />{label}</Task>
              ) : (
                <Launcher key={i}><Icon /></Launcher>
              )
            )}
          </Group>
        ))}
        <PsTools>PsTools<b>»</b></PsTools>
        <Tray>
          <TrayIcons>{trayIcons.map((Icon, i) => <Icon key={i} />)}</TrayIcons>
          <Clock>3:10 PM<br />Friday<br />3/28/2014</Clock>
          <TrayBadge />
        </Tray>
      </TaskInner>
    </Taskbar>
  );
}

export default function App() {
  return (
    <>
      <Global />
      <Screen>
        <Browser>
          <BrowserChrome />
          <Viewport>
            <SidePanel />
            <MainPage />
            <Scroll>
              <ScrollButton><Svg w={9} h={5} v="0 0 9 5"><path d="M0 5L4.5 0L9 5Z" fill="#8b8883" /></Svg></ScrollButton>
              <ScrollButton><Svg w={9} h={5} v="0 0 9 5"><path d="M0 0L4.5 5L9 0Z" fill="#8b8883" /></Svg></ScrollButton>
            </Scroll>
          </Viewport>
          <Status />
        </Browser>
        <TaskPanel />
      </Screen>
    </>
  );
}
